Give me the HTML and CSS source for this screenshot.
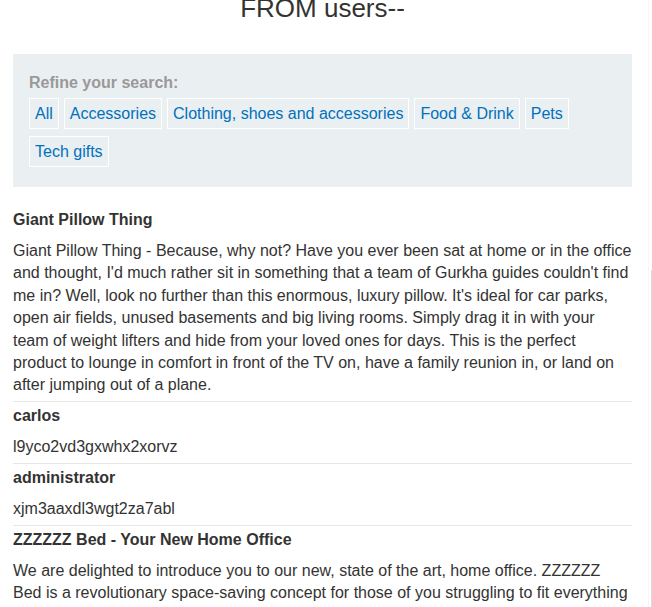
FILE: index.html
```html
<!DOCTYPE html>
<html>
<head>
<meta charset="utf-8">
<link rel="stylesheet" href="styles.css">
</head>
<body>
<div class="edge edge-a"></div>
<div class="edge edge-b"></div>
<main class="container">
  <h1 class="title">FROM users--</h1>
  <section class="filter">
    <div class="filter-label">Refine your search:</div>
    <div class="filter-buttons">
      <a class="filter-btn">All</a>
      <a class="filter-btn">Accessories</a>
      <a class="filter-btn">Clothing, shoes and accessories</a>
      <a class="filter-btn">Food &amp; Drink</a>
      <a class="filter-btn">Pets</a>
      <a class="filter-btn">Tech gifts</a>
    </div>
  </section>
  <div class="results">
    <div class="row">
      <div class="row-title">Giant Pillow Thing</div>
      <div class="row-text">Giant Pillow Thing - Because, why not? Have you ever been sat at home or in the office and thought, I'd much rather sit in something that a team of Gurkha guides couldn't find me in? Well, look no further than this enormous, luxury pillow. It's ideal for car parks, open air fields, unused basements and big living rooms. Simply drag it in with your team of weight lifters and hide from your loved ones for days. This is the perfect product to lounge in comfort in front of the TV on, have a family reunion in, or land on after jumping out of a plane.</div>
    </div>
    <div class="row">
      <div class="row-title">carlos</div>
      <div class="row-text">l9yco2vd3gxwhx2xorvz</div>
    </div>
    <div class="row">
      <div class="row-title">administrator</div>
      <div class="row-text">xjm3aaxdl3wgt2za7abl</div>
    </div>
    <div class="row">
      <div class="row-title">ZZZZZZ Bed - Your New Home Office</div>
      <div class="row-text">We are delighted to introduce you to our new, state of the art, home office. ZZZZZZ Bed is a revolutionary space-saving concept for those of you struggling to fit everything into your home. With a fully functional bed that folds away into a desk, you will never need to leave your room again.</div>
    </div>
  </div>
</main>
</body>
</html>
```
FILE: styles.css
```css
html, body {
  margin: 0;
  padding: 0;
  background: #fff;
}
body {
  font-family: "Liberation Sans", Arial, sans-serif;
  font-size: 16px;
  line-height: 22.4px;
  color: #333332;
  overflow: hidden;
}
.edge {
  position: fixed;
  width: 1px;
}
.edge-a {
  left: 648px;
  top: 0;
  bottom: 0;
  background: #f6f6f6;
}
.edge-b {
  left: 651px;
  top: 270px;
  bottom: 0;
  background: #dcdcdc;
}
.container {
  margin-left: 13px;
  width: 619px;
}
.title {
  margin: -7px 0 31px;
  font-size: 26px;
  line-height: 30px;
  font-weight: normal;
  text-align: center;
  color: #333332;
}
.filter {
  background: #eaeff2;
  padding: 17.5px 16px 19.2px;
}
.filter-label {
  font-weight: bold;
  color: #999;
  margin-bottom: 4px;
}
.filter-buttons {
  display: flex;
  flex-wrap: wrap;
  column-gap: 5px;
  row-gap: 6.7px;
}
.filter-btn {
  display: block;
  border: 1px solid #fff;
  padding: 4px 5px 3px;
  color: #0071bc;
  text-decoration: none;
}
.results {
  margin-top: 19.5px;
}
.row {
  border-bottom: 1px solid #e6e6e6;
}
.row-title {
  font-weight: bold;
  padding: 3px 0 4px;
}
.row-text {
  padding: 4.5px 0 4.5px;
}
```
